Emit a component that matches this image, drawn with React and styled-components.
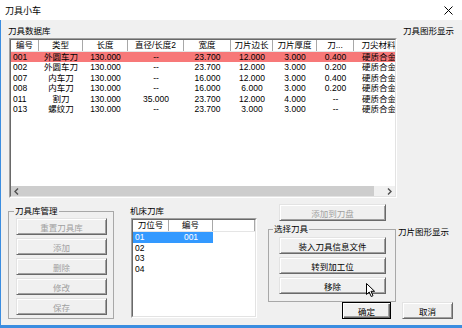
import React from "react";
import styled, { createGlobalStyle } from "styled-components";

const Global = createGlobalStyle`
  html, body { margin: 0; padding: 0; background: #f0f0f0; }
  body {
    font-family: "Liberation Sans", "Noto Sans CJK SC", sans-serif;
    font-size: 8.5px;
    color: #000;
  }
  * { box-sizing: border-box; }
`;

const Window = styled.div`
  width: 462px;
  height: 328px;
  display: flex;
  flex-direction: column;
  background: #f0f0f0;
  overflow: hidden;
`;

const TitleBar = styled.div`
  height: 20px;
  flex: none;
  background: #fff;
  display: flex;
  align-items: center;
  justify-content: space-between;
  padding: 0 9px 0 5px;
  font-size: 9px;
`;

const Body = styled.div`
  flex: 1;
  display: flex;
  flex-direction: column;
  border-left: 1px solid #3b8de0;
  border-bottom: 3px solid #3b8de0;
  padding-left: 7px;
`;

const TopSection = styled.div`
  display: flex;
  padding-top: 5px;
`;

const Column = styled.div`
  display: flex;
  flex-direction: column;
  flex: none;
  width: ${(p) => (p.$w ? `${p.$w}px` : "auto")};
  margin-left: ${(p) => p.$ml || 0}px;
  margin-top: ${(p) => p.$mt || 0}px;
`;

const Label = styled.div`
  line-height: ${(p) => p.$lh || 10}px;
  height: ${(p) => p.$lh || 10}px;
  white-space: nowrap;
  margin-top: ${(p) => p.$mt || 0}px;
`;

const Sunken = styled.div`
  width: ${(p) => p.$w}px;
  height: ${(p) => p.$h}px;
  margin-left: ${(p) => p.$ml || 0}px;
  margin-top: ${(p) => p.$mt || 0}px;
  flex: none;
  border: 1px solid;
  border-color: #a0a0a0 #fff #fff #a0a0a0;
  background: #fff;
  display: flex;
`;

const SunkenInner = styled.div`
  flex: 1;
  min-width: 0;
  border: 1px solid;
  border-color: #696969 #e3e3e3 #e3e3e3 #696969;
  display: flex;
  flex-direction: column;
  overflow: hidden;
`;

const HeaderRow = styled.div`
  display: flex;
  flex: none;
  height: 12px;
  border-bottom: 1px solid #e5e5e5;
`;

const HeaderCell = styled.div`
  flex: none;
  width: ${(p) => p.$w}px;
  border-right: 1px solid #a8a8a8;
  text-align: ${(p) => p.$align || "center"};
  line-height: 11px;
  white-space: nowrap;
  overflow: hidden;
`;

const Row = styled.div`
  display: flex;
  flex: none;
  height: ${(p) => p.$h}px;
  line-height: ${(p) => p.$h}px;
  background: ${(p) => (p.$sel ? "#f77878" : "transparent")};
`;

const Cell = styled.div`
  flex: none;
  width: ${(p) => p.$w}px;
  text-align: ${(p) => p.$align || "center"};
  padding-left: ${(p) => (p.$align === "left" ? 2 : 0)}px;
  white-space: nowrap;
  overflow: hidden;
  background: ${(p) => (p.$sel ? "#3399ff" : "transparent")};
  color: ${(p) => (p.$sel ? "#fff" : "inherit")};
`;

const Fill = styled.div`
  flex: 1;
`;

const HScroll = styled.div`
  flex: none;
  height: 10px;
  display: flex;
  background: #f0f0f0;
`;

const ScrollArrow = styled.div`
  flex: none;
  width: ${(p) => p.$w}px;
  display: flex;
  align-items: center;
  justify-content: center;
  background: ${(p) => (p.$dark ? "#cdcdcd" : "#f0f0f0")};
`;

const ScrollThumb = styled.div`
  flex: none;
  width: ${(p) => p.$w}px;
  background: #cdcdcd;
`;

const BottomSection = styled.div`
  display: flex;
  align-items: flex-start;
`;

const Group = styled.fieldset`
  margin: ${(p) => p.$mt || 0}px 0 0 0;
  padding: 0;
  min-width: 0;
  flex: none;
  width: ${(p) => p.$w}px;
  height: ${(p) => p.$h}px;
  border: 1px solid #a8a8a8;
`;

const Legend = styled.legend`
  padding: 0 1px;
  margin-left: ${(p) => p.$ml}px;
  line-height: 10px;
  height: 10px;
  white-space: nowrap;
`;

const ButtonStack = styled.div`
  display: flex;
  flex-direction: column;
  gap: 3px;
  padding-left: ${(p) => p.$pl}px;
  margin-top: ${(p) => p.$mt}px;
`;

const Button = styled.button`
  position: relative;
  flex: none;
  width: ${(p) => p.$w}px;
  height: 17px;
  margin: ${(p) => p.$mt || 0}px 0 0 ${(p) => p.$ml || 0}px;
  padding: 0;
  font: inherit;
  display: flex;
  align-items: center;
  justify-content: center;
  background: #f0f0f0;
  color: ${(p) => (p.disabled ? "#a0a0a0" : "#000")};
  border: 1px solid;
  border-color: ${(p) =>
    p.$default ? "#000" : "#e3e3e3 #696969 #696969 #e3e3e3"};
  box-shadow: ${(p) =>
    p.$default
      ? "inset 1px 1px 0 #fff, inset -1px -1px 0 #696969, inset -2px -2px 0 #a0a0a0"
      : "inset 1px 1px 0 #fff, inset -1px -1px 0 #a0a0a0"};
  white-space: nowrap;
`;

const Cursor = styled.svg`
  position: absolute;
  left: 86px;
  top: 5px;
`;

const Chevron = ({ dir }) => (
  <svg width="5" height="7" viewBox="0 0 5 7">
    <polyline
      points={dir === "left" ? "4,0.5 1,3.5 4,6.5" : "1,0.5 4,3.5 1,6.5"}
      fill="none"
      stroke="#505050"
      strokeWidth="1.4"
    />
  </svg>
);

const toolCols = [
  { w: 28, title: "编号", align: "left" },
  { w: 44, title: "类型" },
  { w: 45, title: "长度" },
  { w: 56, title: "直径/长度2" },
  { w: 47, title: "宽度" },
  { w: 42, title: "刀片边长" },
  { w: 44, title: "刀片厚度" },
  { w: 37, title: "刀..." },
  { w: 50, title: "刀尖材料" },
];

const tools = [
  ["001", "外圆车刀", "130.000", "--", "23.700", "12.000", "3.000", "0.400", "硬质合金"],
  ["002", "外圆车刀", "130.000", "--", "23.700", "12.000", "3.000", "0.200", "硬质合金"],
  ["007", "内车刀", "130.000", "--", "16.000", "12.000", "3.000", "0.400", "硬质合金"],
  ["008", "内车刀", "130.000", "--", "16.000", "6.000", "3.000", "0.200", "硬质合金"],
  ["011", "割刀", "130.000", "35.000", "23.700", "12.000", "4.000", "--", "硬质合金"],
  ["013", "螺纹刀", "130.000", "--", "23.700", "3.000", "3.000", "--", "硬质合金"],
];

const magCols = [
  { w: 36, title: "刀位号", align: "left" },
  { w: 44, title: "编号" },
  { w: 42, title: "" },
];

const mag = [
  ["01", "001"],
  ["02", ""],
  ["03", ""],
  ["04", ""],
];

export default function App() {
  return (
    <>
      <Global />
      <Window>
        <TitleBar>
          <span>刀具小车</span>
          <svg width="9" height="9" viewBox="0 0 9 9">
            <path d="M0.5 0.5 L8.5 8.5 M8.5 0.5 L0.5 8.5" stroke="#000" strokeWidth="1" />
          </svg>
        </TitleBar>
        <Body>
          <TopSection>
            <Column $w={390}>
              <Label $lh={12}>刀具数据库</Label>
              <Sunken $w={388} $h={160} $ml={1} $mt={1}>
                <SunkenInner>
                  <HeaderRow>
                    {toolCols.map((c) => (
                      <HeaderCell key={c.title} $w={c.w}>
                        {c.title}
                      </HeaderCell>
                    ))}
                  </HeaderRow>
                  {tools.map((r, i) => (
                    <Row key={r[0]} $h={10.4} $sel={i === 0}>
                      {r.map((v, j) => (
                        <Cell key={j} $w={toolCols[j].w} $align={toolCols[j].align}>
                          {v}
                        </Cell>
                      ))}
                    </Row>
                  ))}
                  <Fill />
                  <HScroll>
                    <ScrollArrow $w={11} $dark>
                      <Chevron dir="left" />
                    </ScrollArrow>
                    <ScrollThumb $w={352} />
                    <Fill />
                    <ScrollArrow $w={11}>
                      <Chevron dir="right" />
                    </ScrollArrow>
                  </HScroll>
                </SunkenInner>
              </Sunken>
            </Column>
            <Column $ml={5}>
              <Label $lh={12}>刀具图形显示</Label>
            </Column>
          </TopSection>

          <BottomSection>
            <Group $w={106} $h={113} $mt={8}>
              <Legend $ml={5}>刀具库管理</Legend>
              <ButtonStack $pl={7} $mt={2}>
                <Button $w={91} disabled>重置刀具库</Button>
                <Button $w={91} disabled>添加</Button>
                <Button $w={91} disabled>删除</Button>
                <Button $w={91} disabled>修改</Button>
                <Button $w={91} disabled>保存</Button>
              </ButtonStack>
            </Group>

            <Column $w={127} $ml={16} $mt={8}>
              <Label>机床刀库</Label>
              <Sunken $w={126} $h={100} $ml={1} $mt={2}>
                <SunkenInner>
                  <HeaderRow>
                    {magCols.map((c, i) => (
                      <HeaderCell key={i} $w={c.w}>
                        {c.title}
                      </HeaderCell>
                    ))}
                  </HeaderRow>
                  {mag.map((r, i) => (
                    <Row key={r[0]} $h={10.6}>
                      {r.map((v, j) => (
                        <Cell key={j} $w={magCols[j].w} $align={magCols[j].align} $sel={i === 0}>
                          {v}
                        </Cell>
                      ))}
                    </Row>
                  ))}
                </SunkenInner>
              </Sunken>
            </Column>

            <Column $w={128} $ml={11} $mt={6}>
              <Button $w={107} $ml={11} disabled>添加到刀盘</Button>
              <Group $w={128} $h={78} $mt={3}>
                <Legend $ml={4}>选择刀具</Legend>
                <ButtonStack $pl={10} $mt={3}>
                  <Button $w={107}>装入刀具信息文件</Button>
                  <Button $w={107}>转到加工位</Button>
                  <Button $w={107}>
                    移除
                    <Cursor width="11" height="15" viewBox="0 0 11 15">
                      <path
                        d="M0.5 0.5 L0.5 11.5 L3.2 9 L5.2 13.5 L7 12.7 L5 8.3 L8.6 8.3 Z"
                        fill="#fff"
                        stroke="#000"
                        strokeWidth="1"
                        strokeLinejoin="miter"
                      />
                    </Cursor>
                  </Button>
                </ButtonStack>
              </Group>
              <Button $w={49} $ml={74} $default>确定</Button>
            </Column>

            <Column $ml={2} $mt={28.5}>
              <Label>刀片图形显示</Label>
              <Button $w={51} $ml={4} $mt={65.5}>取消</Button>
            </Column>
          </BottomSection>
        </Body>
      </Window>
    </>
  );
}
